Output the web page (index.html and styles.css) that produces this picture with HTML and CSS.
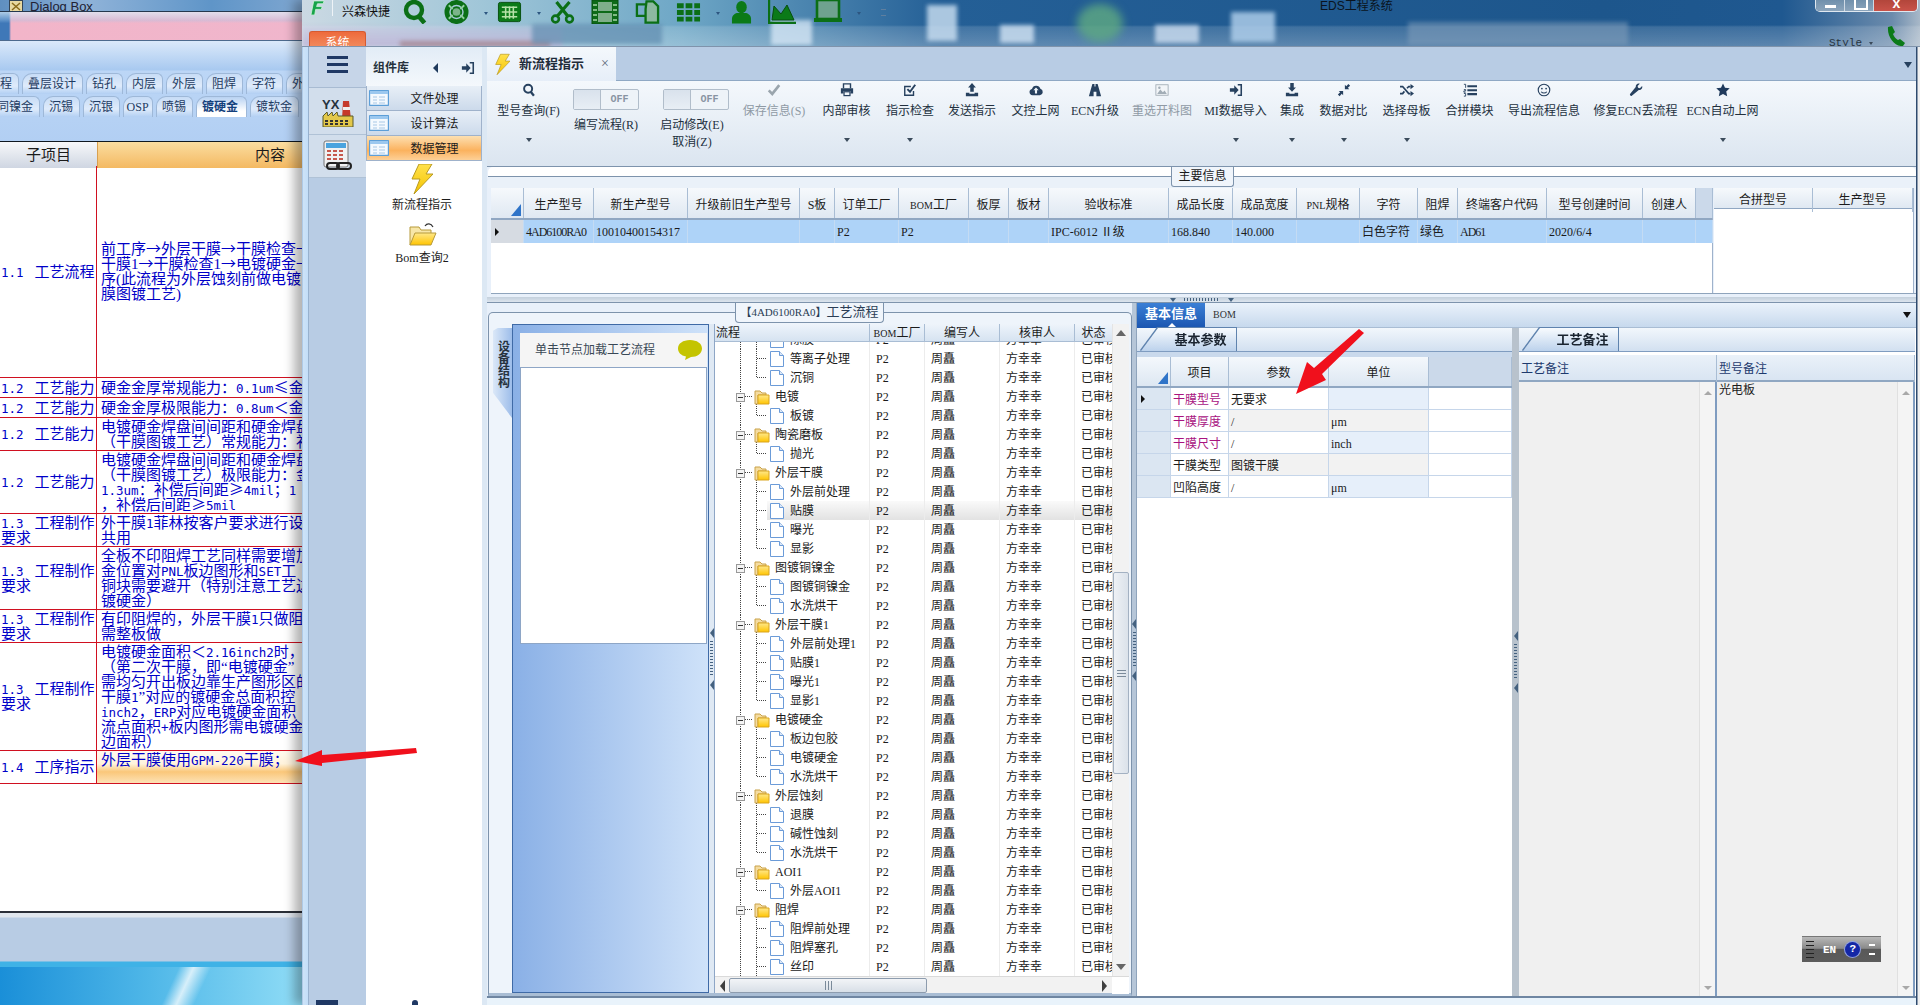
FILE: index.html
```html
<!DOCTYPE html>
<html lang="zh-CN">
<head>
<meta charset="utf-8">
<title>EDS工程系统</title>
<link rel="stylesheet" href="styles.css">
</head>
<body>
<svg class="defs" aria-hidden="true">
  <defs>
    <linearGradient id="fgold" x1="0" y1="0" x2="0" y2="1"><stop offset="0" stop-color="#ffe88a"/><stop offset="1" stop-color="#ffc400"/></linearGradient>
    <linearGradient id="bolt" x1="0" y1="0" x2="0" y2="1"><stop offset="0" stop-color="#ffe14d"/><stop offset="1" stop-color="#f5c400"/></linearGradient>
    <symbol id="folder" viewBox="0 0 16 16"><path d="M1 15V2h5l2 2h4v2H4v9z" fill="#f5dca0" stroke="#c9a24a"/><path d="M4 15V6h11v9z" fill="url(#fgold)" stroke="#d9a520"/></symbol>
    <symbol id="doc" viewBox="0 0 14 16"><path d="M.5.5h9l4 4v11H.5z" fill="#fff" stroke="#6b9bd8"/><path d="M9.5.5v4h4" fill="#dbe8f8" stroke="#6b9bd8"/></symbol>
    <symbol id="win" viewBox="0 0 20 16"><rect x=".5" y=".5" width="19" height="15" rx="1" fill="#f4f9fe" stroke="#5d9fd8" stroke-width="1.4"/><rect x="1" y="1" width="18" height="3" fill="#9cc8ef"/><path d="M4 7h4M10 7h6M4 10h4M10 10h6M4 13h4M10 13h6" stroke="#a8c8e6"/></symbol>
    <symbol id="g-search" viewBox="0 0 24 24"><circle cx="10.5" cy="10" r="8" fill="none" stroke="#0b6f16" stroke-width="4.4"/><path d="M15 16l6 7" stroke="#0b6f16" stroke-width="4.6"/></symbol>
    <symbol id="g-buoy" viewBox="0 0 26 24"><circle cx="13" cy="12" r="10" fill="none" stroke="#0b6f16" stroke-width="5"/><circle cx="13" cy="12" r="5" fill="#7bb48a" stroke="#0b6f16" stroke-width="2"/><path d="M5 5l4 4M21 5l-4 4M5 19l4-4M21 19l-4-4" stroke="#8fcf9c" stroke-width="2"/></symbol>
    <symbol id="g-table" viewBox="0 0 26 24"><rect x="1.5" y="2" width="23" height="20" rx="2" fill="#0b7a18" stroke="#064f0e"/><path d="M5 7h16M5 12h16M5 17h16M9 6v13M13 6v13M17 6v13" stroke="#b6e2a8" stroke-width="1.6"/></symbol>
    <symbol id="g-cut" viewBox="0 0 24 24"><path d="M6 2l12 15M19 2L6 17" stroke="#0b6f16" stroke-width="3.2"/><circle cx="5" cy="19" r="3.4" fill="none" stroke="#0b6f16" stroke-width="2.6"/><circle cx="19" cy="19" r="3.4" fill="none" stroke="#0b6f16" stroke-width="2.6"/></symbol>
    <symbol id="g-film" viewBox="0 0 28 24"><rect x="1" y="0" width="26" height="24" fill="#0e6a18" stroke="#064f0e"/><rect x="7" y="2" width="14" height="9" fill="#7fae8a"/><rect x="7" y="13" width="14" height="9" fill="#7fae8a"/><path d="M2 5h4M2 10h4M2 15h4M2 20h4M22 5h4M22 10h4M22 15h4M22 20h4" stroke="#a8d6a8" stroke-width="1.5"/></symbol>
    <symbol id="g-docs" viewBox="0 0 26 24"><path d="M2 4h9l3 3v9H2z" fill="none" stroke="#0b6f16" stroke-width="2.4"/><path d="M12 1h7l5 5v17H11V9z" fill="#8db9a0" stroke="#0b6f16" stroke-width="2.4"/></symbol>
    <symbol id="g-grid" viewBox="0 0 26 24"><path d="M1 3h7v5H1zM10 3h7v5h-7zM19 3h6v5h-6zM1 10h7v5H1zM10 10h7v5h-7zM19 10h6v5h-6zM1 17h7v5H1zM10 17h7v5h-7zM19 17h6v5h-6z" fill="#0b6f16"/></symbol>
    <symbol id="g-user" viewBox="0 0 22 24"><ellipse cx="11" cy="7" rx="5.5" ry="6.5" fill="#0b7a18"/><path d="M1 24v-5c0-4 4-6 6-6h8c2 0 6 2 6 6v5z" fill="#0b7a18"/></symbol>
    <symbol id="g-chart" viewBox="0 0 28 24"><path d="M1 0v23h27" fill="none" stroke="#0b6f16" stroke-width="2.4"/><path d="M4 20l2-14 7 8 6-9 7 15z" fill="#0b7a18" stroke="#064f0e"/></symbol>
    <symbol id="g-lap" viewBox="0 0 28 24"><rect x="3" y="0" width="22" height="19" fill="#6fa28f" stroke="#0b6f16" stroke-width="2.6"/><rect x="0" y="18" width="28" height="4" fill="#0b6f16"/></symbol>
    <symbol id="r-search" viewBox="0 0 16 16"><circle cx="7" cy="6.5" r="4.6" fill="none" stroke="#27415f" stroke-width="2.2"/><path d="M10 10l3.6 4.6" stroke="#27415f" stroke-width="2.6"/></symbol>
    <symbol id="r-check" viewBox="0 0 16 16"><path d="M2 8.5l4 4 8-10" fill="none" stroke="#9aa5ad" stroke-width="3"/></symbol>
    <symbol id="r-print" viewBox="0 0 16 16"><path d="M4 6V1h8v5" fill="none" stroke="#27415f" stroke-width="1.6"/><path d="M1 6h14v6h-3V9H4v3H1z" fill="#27415f"/><rect x="4.6" y="10" width="6.8" height="4.4" fill="none" stroke="#27415f" stroke-width="1.4"/></symbol>
    <symbol id="r-checkbox" viewBox="0 0 16 16"><path d="M12 9v5H2V4h7" fill="none" stroke="#27415f" stroke-width="1.6"/><path d="M5 7l3 3 6-8" fill="none" stroke="#27415f" stroke-width="2.2"/></symbol>
    <symbol id="r-upload" viewBox="0 0 16 16"><path d="M8 0l4.5 5H10v5H6V5H3.5z" fill="#27415f"/><path d="M1 11h4v1.4h6V11h4v4H1z" fill="#27415f"/></symbol>
    <symbol id="r-cloud" viewBox="0 0 16 16"><path d="M4 14a3.6 3.6 0 0 1-.6-7.1A5 5 0 0 1 13 6.6 3.8 3.8 0 0 1 12.5 14z" fill="#27415f"/><path d="M8 5l3 3.4H9.2V12H6.8V8.4H5z" fill="#eef4fa"/></symbol>
    <symbol id="r-road" viewBox="0 0 16 16"><path d="M5 1h2.4v3h1.2V1H11l4 14H9.6V10H6.4v5H1z" fill="#27415f"/></symbol>
    <symbol id="r-image" viewBox="0 0 16 16"><rect x="1" y="2" width="14" height="12" fill="#f2f5f8" stroke="#a2adb6"/><path d="M2.5 12.5l3.5-5 3 3 2-2 2.5 4z" fill="#a2adb6"/><circle cx="5" cy="5.5" r="1.4" fill="#a2adb6"/></symbol>
    <symbol id="r-signin" viewBox="0 0 16 16"><path d="M1 6h5V2.5L11 8l-5 5.5V10H1z" fill="#27415f"/><path d="M10 2h4v12h-4" fill="none" stroke="#27415f" stroke-width="1.8"/></symbol>
    <symbol id="r-download" viewBox="0 0 16 16"><path d="M6 0h4v5h2.5L8 10 3.5 5H6z" fill="#27415f"/><path d="M1 11h4v1.4h6V11h4v4H1z" fill="#27415f"/></symbol>
    <symbol id="r-compress" viewBox="0 0 16 16"><path d="M9 7V2l1.6 1.6L13 1l2 2-2.6 2.4L14 7zM7 9v5l-1.6-1.6L3 15l-2-2 2.6-2.4L2 9z" fill="#27415f"/></symbol>
    <symbol id="r-random" viewBox="0 0 16 16"><path d="M0 4h3l7 8h2M0 12h3l2-2.4M8 6l2-2h2" fill="none" stroke="#27415f" stroke-width="2"/><path d="M12 1l4 3-4 3zM12 9l4 3-4 3z" fill="#27415f"/></symbol>
    <symbol id="r-list" viewBox="0 0 16 16"><path d="M5 2.500h11v2.400H5zM5 7h11v2.400H5zM5 11.500h11v2.400H5z" fill="#27415f"/><path d="M1 1.500h2v4M1 7.500h2v1.500H1v1.500h2M1 12h2v3H1" fill="none" stroke="#27415f"/></symbol>
    <symbol id="r-smile" viewBox="0 0 16 16"><circle cx="8" cy="8" r="6.600" fill="none" stroke="#27415f" stroke-width="1.3"/><circle cx="5.600" cy="6.400" r="1" fill="#27415f"/><circle cx="10.400" cy="6.400" r="1" fill="#27415f"/><path d="M4.800 10c1.500 2 4.900 2 6.400 0" fill="none" stroke="#27415f" stroke-width="1.2"/></symbol>
    <symbol id="r-wrench" viewBox="0 0 16 16"><path d="M15 3.500l-2.600 2.400-2-.6-.6-2L12.300.8C10 0 7.500 1.500 7.700 4.500L1.200 12.500c-.8 1 1 2.900 2 2.100l8-6.500C14 8.300 15.800 6 15 3.500z" fill="#27415f"/></symbol>
    <symbol id="r-star" viewBox="0 0 16 16"><path d="M8 .5l2.300 5 5.400.6-4 3.700 1.100 5.400L8 12.500l-4.800 2.700 1.100-5.400-4-3.700 5.400-.6z" fill="#1f3a5c"/></symbol>
  </defs>
</svg>

<div class="desktop-streak"></div>

<section class="win-left">
  <div class="lw-title"><svg class="lw-ico" viewBox="0 0 14 12"><rect x=".5" y=".5" width="13" height="11" fill="#e8d8a0" stroke="#345"/><path d="M3 3l8 7M11 3l-8 7" stroke="#8a6a1a" stroke-width="1.5"/></svg><span>Dialog Box</span></div>
  <div class="lw-blur"></div>
  <div class="lw-tabs">
    <div class="tabrow tabrow-a">
      <span class="lt lt-first">程</span><span class="lt">叠层设计</span><span class="lt">钻孔</span><span class="lt">内层</span><span class="lt">外层</span><span class="lt">阻焊</span><span class="lt">字符</span><span class="lt">外</span>
    </div>
    <div class="tabrow tabrow-b">
      <span class="lt lt-second">同镍金</span><span class="lt">沉锡</span><span class="lt">沉银</span><span class="lt lt-osp">OSP</span><span class="lt">喷锡</span><span class="lt lt-on">镀硬金</span><span class="lt">镀软金</span>
    </div>
  </div>
  <div class="lw-head"><div class="lh-a">子项目</div><div class="lh-b">内容</div></div>
  <div class="lw-grid">
    <div class="lc1"><span><span class="nm">1.1</span>工艺流程</span></div><div class="lc2"><span>前工序<span class="w">→</span>外层干膜<span class="w">→</span>干膜检查<span class="w">→</span><br>干膜1<span class="w">→</span>干膜检查1<span class="w">→</span>电镀硬金<span class="w">→</span><br>序(此流程为外层蚀刻前做电镀<br>膜图镀工艺)</span></div>
    <div class="lc1"><span><span class="nm">1.2</span>工艺能力</span></div><div class="lc2"><span>硬金金厚常规能力：<span class="l">0.1um</span><span class="w">≤</span>金</span></div>
    <div class="lc1"><span><span class="nm">1.2</span>工艺能力</span></div><div class="lc2"><span>硬金金厚极限能力：<span class="l">0.8um</span>＜金</span></div>
    <div class="lc1"><span><span class="nm">1.2</span>工艺能力</span></div><div class="lc2"><span>电镀硬金焊盘间间距和硬金焊盘<br>（干膜图镀工艺）常规能力：补</span></div>
    <div class="lc1"><span><span class="nm">1.2</span>工艺能力</span></div><div class="lc2"><span>电镀硬金焊盘间间距和硬金焊盘<br>（干膜图镀工艺）极限能力：金<br><span class="l">1.3um</span>：补偿后间距<span class="w">≥</span><span class="l">4mil</span>；<span class="l">1</span><br>，补偿后间距<span class="w">≥</span><span class="l">5mil</span></span></div>
    <div class="lc1"><span><span class="nm">1.3</span>工程制作<br>要求</span></div><div class="lc2"><span>外干膜<span class="l">1</span>菲林按客户要求进行设<br>共用</span></div>
    <div class="lc1"><span><span class="nm">1.3</span>工程制作<br>要求</span></div><div class="lc2"><span>全板不印阻焊工艺同样需要增加<br>金位置对<span class="l">PNL</span>板边图形和<span class="l">SET</span>工<br>铜块需要避开（特别注意工艺边<br>镀硬金）</span></div>
    <div class="lc1"><span><span class="nm">1.3</span>工程制作<br>要求</span></div><div class="lc2"><span>有印阻焊的，外层干膜<span class="l">1</span>只做阻<br>需整板做</span></div>
    <div class="lc1"><span><span class="nm">1.3</span>工程制作<br>要求</span></div><div class="lc2"><span>电镀硬金面积＜<span class="l">2.16inch2</span>时，<br>（第二次干膜，即“电镀硬金”<br>需均匀开出板边靠生产图形区的<br>干膜<span class="l">1</span>”对应的镀硬金总面积控<br><span class="l">inch2</span>，<span class="l">ERP</span>对应电镀硬金面积<br>流点面积<span class="l">+</span>板内图形需电镀硬金<br>边面积）</span></div>
    <div class="lc1"><span><span class="nm">1.4</span>工序指示</span></div><div class="lc2 lc-hot"><span>外层干膜使用<span class="l">GPM-220</span>干膜；</span></div>
  </div>
  <div class="lw-blank"></div>
  <div class="lw-status"></div>
</section>

<section class="win-main">
  <header class="tb">
    <span class="blob b1"></span><span class="blob b2"></span><span class="blob b3"></span><span class="blob b4"></span><span class="blob b5"></span><span class="blob b6"></span><span class="blob b7"></span><span class="blob b8"></span><span class="blob b9"></span><span class="blob b10"></span>
    <div class="tb-tools">
      <svg class="logo" viewBox="0 0 16 16"><path d="M4 1h11l-1 3H8L7 7h6l-1 3H6l-1 6H1z" fill="#17a34a" stroke="#d6f5df" stroke-width=".8"/></svg>
      <i class="tb-sep"></i>
      <span class="tb-name">兴森快捷</span>
      <svg class="gi gi-s"><use href="#g-search"/></svg>
      <svg class="gi gi-s"><use href="#g-buoy"/></svg>
      <i class="tb-drop"></i>
      <svg class="gi gi-s"><use href="#g-table"/></svg>
      <i class="tb-drop"></i>
      <svg class="gi gi-s"><use href="#g-cut"/></svg>
      <svg class="gi gi-w"><use href="#g-film"/></svg>
      <svg class="gi gi-s"><use href="#g-docs"/></svg>
      <svg class="gi gi-s"><use href="#g-grid"/></svg>
      <i class="tb-drop"></i>
      <svg class="gi gi-n"><use href="#g-user"/></svg>
      <svg class="gi gi-w"><use href="#g-chart"/></svg>
      <svg class="gi gi-w gi-lap"><use href="#g-lap"/></svg>
      <i class="tb-drop"></i>
      <i class="tb-grab"></i>
    </div>
    <div class="tb-title">EDS工程系统</div>
    <div class="winbtns"><span class="wb wb-min"></span><span class="wb wb-max"></span><span class="wb wb-close">x</span></div>
    <div class="tb-style"><span>Style</span><i class="tb-drop tb-drop-s"></i></div>
    <svg class="phone" viewBox="0 0 20 20"><path d="M2 1l4-1 3 6-2 2c1 3 3 5 5 6l2-1 5 4-2 3c-8 1-16-9-15-19z" fill="#0b7a18"/></svg>
    <div class="systab">系统</div>
  </header>

  <div class="frame">
    <i class="edge"></i>
    <nav class="rail">
      <div class="rail-a"><span class="burger"></span></div>
      <div class="rail-b">
        <svg class="yx" viewBox="0 0 32 32"><text x="0" y="14" class="yx-t">YX</text><path d="M21 6h6l2 19h-9z" fill="#c53a2b"/><path d="M21 12h7v3h-7z" fill="#eee"/><path d="M1 32V21l4-4 1 4 4-4 1 4 4-4 1 4h15v11z" fill="#e3c84a" stroke="#5a5a2a"/><path d="M3 26h3M8 26h3M13 26h3M18 26h3M23 26h3M3 29h3M8 29h3M13 29h3M18 29h3M23 29h3" stroke="#333" stroke-width="2"/></svg>
      </div>
      <div class="rail-c">
        <svg class="calc" viewBox="0 0 30 32"><rect x="1" y="1" width="24" height="26" rx="2" fill="#f0f1f2" stroke="#777"/><rect x="3" y="3" width="20" height="5" fill="#4aa3de"/><path d="M4 11h4M10 11h4M16 11h4M4 15h4M10 15h4M16 15h4M4 19h4M10 19h4M16 19h4" stroke="#c6584c" stroke-width="2"/><rect x="4" y="23" width="12" height="6" rx="3" fill="none" stroke="#222" stroke-width="2"/><rect x="14" y="23" width="14" height="6" rx="3" fill="none" stroke="#222" stroke-width="2"/></svg>
      </div>
    </nav>
    <aside class="comps">
      <div class="comps-head"><b>组件库</b><i class="tri-l"></i><svg class="rico"><use href="#r-signin"/></svg></div>
      <div class="comp-row"><svg class="wi"><use href="#win"/></svg><span>文件处理</span></div>
      <div class="comp-row"><svg class="wi"><use href="#win"/></svg><span>设计算法</span></div>
      <div class="comp-row comp-on"><svg class="wi"><use href="#win"/></svg><span>数据管理</span></div>
      <div class="comp-item">
        <svg class="bolt-l" viewBox="0 0 22 30"><path d="M8 0h13l-6 10h7L3 30l6-15H1z" fill="url(#bolt)" stroke="#b89a20"/></svg>
        <span>新流程指示</span>
      </div>
      <div class="comp-item comp-item-b">
        <svg class="fold-l" viewBox="0 0 30 26"><path d="M3 24V6h9l2 3h10v4" fill="#f7e6a8" stroke="#b79a3a"/><path d="M3 24l5-12h21l-5 12z" fill="url(#fgold)" stroke="#b79a3a"/><path d="M18 5c2-3 6-3 8 1" fill="none" stroke="#333" stroke-width="1.2"/></svg>
        <span>Bom查询2</span>
      </div>
    </aside>
    <main class="content">
      <div class="tabstrip">
        <div class="doc-tab"><svg class="bolt-s" viewBox="0 0 22 30"><path d="M8 0h13l-6 10h7L3 30l6-15H1z" fill="url(#bolt)" stroke="#b89a20"/></svg><b>新流程指示</b><span class="x">×</span></div>
        <i class="strip-drop"></i>
      </div>
      <div class="ribbon">
        <div class="ri"><svg class="rico"><use href="#r-search"/></svg><span>型号查询(F)</span><i class="dn"></i></div>
        <div class="ri ri-t"><span class="tg"><i></i><b>OFF</b></span><span>编写流程(R)</span></div>
        <div class="ri ri-t ri-t2"><span class="tg"><i></i><b>OFF</b></span><span>启动修改(E)</span><span>取消(Z)</span></div>
        <div class="ri ri-off"><svg class="rico"><use href="#r-check"/></svg><span>保存信息(S)</span></div>
        <div class="ri"><svg class="rico"><use href="#r-print"/></svg><span>内部审核</span><i class="dn"></i></div>
        <div class="ri"><svg class="rico"><use href="#r-checkbox"/></svg><span>指示检查</span><i class="dn"></i></div>
        <div class="ri"><svg class="rico"><use href="#r-upload"/></svg><span>发送指示</span></div>
        <div class="ri"><svg class="rico"><use href="#r-cloud"/></svg><span>文控上网</span></div>
        <div class="ri"><svg class="rico"><use href="#r-road"/></svg><span>ECN升级</span></div>
        <div class="ri ri-off"><svg class="rico"><use href="#r-image"/></svg><span>重选开料图</span></div>
        <div class="ri"><svg class="rico"><use href="#r-signin"/></svg><span>MI数据导入</span><i class="dn"></i></div>
        <div class="ri"><svg class="rico"><use href="#r-download"/></svg><span>集成</span><i class="dn"></i></div>
        <div class="ri"><svg class="rico"><use href="#r-compress"/></svg><span>数据对比</span><i class="dn"></i></div>
        <div class="ri"><svg class="rico"><use href="#r-random"/></svg><span>选择母板</span><i class="dn"></i></div>
        <div class="ri"><svg class="rico"><use href="#r-list"/></svg><span>合拼模块</span></div>
        <div class="ri"><svg class="rico"><use href="#r-smile"/></svg><span>导出流程信息</span></div>
        <div class="ri"><svg class="rico"><use href="#r-wrench"/></svg><span>修复ECN丢流程</span></div>
        <div class="ri"><svg class="rico"><use href="#r-star"/></svg><span>ECN自动上网</span><i class="dn"></i></div>
      </div>

      <section class="info">
        <div class="legend-main">主要信息</div>
        <div class="info-top"></div>
        <div class="info-body">
          <div class="it">
            <div class="it-row it-head">
              <div class="corner"><i></i></div><div>生产型号</div><div>新生产型号</div><div>升级前旧生产型号</div><div>S板</div><div>订单工厂</div><div><span class="sm">BOM</span>工厂</div><div>板厚</div><div>板材</div><div>验收标准</div><div>成品长度</div><div>成品宽度</div><div><span class="sm">PNL</span>规格</div><div>字符</div><div>阻焊</div><div>终端客户代码</div><div>型号创建时间</div><div>创建人</div><div class="filler"></div>
            </div>
            <div class="it-row it-data">
              <div class="rowmark"><i></i></div><div class="cap">4AD6100RA0</div><div>10010400154317</div><div></div><div></div><div>P2</div><div>P2</div><div></div><div></div><div>IPC-6012 Ⅱ级</div><div>168.840</div><div>140.000</div><div></div><div>白色字符</div><div>绿色</div><div class="cap">AD61</div><div>2020/6/4</div><div></div><div></div>
            </div>
          </div>
          <div class="mt">
            <div class="mt-head"><div>合拼型号</div><div>生产型号</div></div>
          </div>
        </div>
      </section>

      <div class="split-h"><i class="tri-d"></i><span class="dots-h"></span><i class="tri-d"></i></div>

      <section class="lower">
        <div class="proc">
          <div class="legend-proc"><span>【4AD6100RA0】</span>工艺流程</div>
          <div class="proc-box">
            <div class="vtab"><span>设备结构</span></div>
            <div class="blue">
              <div class="blue-head"><span>单击节点加载工艺流程</span><svg class="bubble" viewBox="0 0 24 20"><path d="M12 0c7 0 12 3.5 12 8.500S19 17 13 17l-6 3 1-3.500C3 15.500 0 12.500 0 8.500 0 3.500 5 0 12 0z" fill="#c4c400"/></svg></div>
              <div class="blue-list"></div>
            </div>
            <div class="gap-v"><i class="tri-l2"></i><span class="dots-v"></span><i class="tri-l2"></i></div>
            <div class="tree">
              <div class="tree-main">
                <div class="tree-left">
                  <div class="tr tr-head"><div>流程</div><div class="tc"><span class="sm">BOM</span>工厂</div><div class="tc">编写人</div><div class="tc">核审人</div><div class="tc">状态</div></div>
                  <div class="tree-rows">
                    <div class="tr"><div class="n leaf"><svg class="d"><use href="#doc"/></svg>除胶</div><div>P2</div><div>周矗</div><div>方幸幸</div><div>已审核</div></div>
                    <div class="tr"><div class="n leaf"><svg class="d"><use href="#doc"/></svg>等离子处理</div><div>P2</div><div>周矗</div><div>方幸幸</div><div>已审核</div></div>
                    <div class="tr"><div class="n leaf end"><svg class="d"><use href="#doc"/></svg>沉铜</div><div>P2</div><div>周矗</div><div>方幸幸</div><div>已审核</div></div>
                    <div class="tr"><div class="n fo"><i class="mi"></i><svg class="f"><use href="#folder"/></svg>电镀</div><div>P2</div><div>周矗</div><div>方幸幸</div><div>已审核</div></div>
                    <div class="tr"><div class="n leaf end"><svg class="d"><use href="#doc"/></svg>板镀</div><div>P2</div><div>周矗</div><div>方幸幸</div><div>已审核</div></div>
                    <div class="tr"><div class="n fo"><i class="mi"></i><svg class="f"><use href="#folder"/></svg>陶瓷磨板</div><div>P2</div><div>周矗</div><div>方幸幸</div><div>已审核</div></div>
                    <div class="tr"><div class="n leaf end"><svg class="d"><use href="#doc"/></svg>抛光</div><div>P2</div><div>周矗</div><div>方幸幸</div><div>已审核</div></div>
                    <div class="tr"><div class="n fo"><i class="mi"></i><svg class="f"><use href="#folder"/></svg>外层干膜</div><div>P2</div><div>周矗</div><div>方幸幸</div><div>已审核</div></div>
                    <div class="tr"><div class="n leaf"><svg class="d"><use href="#doc"/></svg>外层前处理</div><div>P2</div><div>周矗</div><div>方幸幸</div><div>已审核</div></div>
                    <div class="tr tr-sel"><div class="n leaf"><svg class="d"><use href="#doc"/></svg>贴膜</div><div>P2</div><div>周矗</div><div>方幸幸</div><div>已审核</div></div>
                    <div class="tr"><div class="n leaf"><svg class="d"><use href="#doc"/></svg>曝光</div><div>P2</div><div>周矗</div><div>方幸幸</div><div>已审核</div></div>
                    <div class="tr"><div class="n leaf end"><svg class="d"><use href="#doc"/></svg>显影</div><div>P2</div><div>周矗</div><div>方幸幸</div><div>已审核</div></div>
                    <div class="tr"><div class="n fo"><i class="mi"></i><svg class="f"><use href="#folder"/></svg>图镀铜镍金</div><div>P2</div><div>周矗</div><div>方幸幸</div><div>已审核</div></div>
                    <div class="tr"><div class="n leaf"><svg class="d"><use href="#doc"/></svg>图镀铜镍金</div><div>P2</div><div>周矗</div><div>方幸幸</div><div>已审核</div></div>
                    <div class="tr"><div class="n leaf end"><svg class="d"><use href="#doc"/></svg>水洗烘干</div><div>P2</div><div>周矗</div><div>方幸幸</div><div>已审核</div></div>
                    <div class="tr"><div class="n fo"><i class="mi"></i><svg class="f"><use href="#folder"/></svg>外层干膜1</div><div>P2</div><div>周矗</div><div>方幸幸</div><div>已审核</div></div>
                    <div class="tr"><div class="n leaf"><svg class="d"><use href="#doc"/></svg>外层前处理1</div><div>P2</div><div>周矗</div><div>方幸幸</div><div>已审核</div></div>
                    <div class="tr"><div class="n leaf"><svg class="d"><use href="#doc"/></svg>贴膜1</div><div>P2</div><div>周矗</div><div>方幸幸</div><div>已审核</div></div>
                    <div class="tr"><div class="n leaf"><svg class="d"><use href="#doc"/></svg>曝光1</div><div>P2</div><div>周矗</div><div>方幸幸</div><div>已审核</div></div>
                    <div class="tr"><div class="n leaf end"><svg class="d"><use href="#doc"/></svg>显影1</div><div>P2</div><div>周矗</div><div>方幸幸</div><div>已审核</div></div>
                    <div class="tr"><div class="n fo"><i class="mi"></i><svg class="f"><use href="#folder"/></svg>电镀硬金</div><div>P2</div><div>周矗</div><div>方幸幸</div><div>已审核</div></div>
                    <div class="tr"><div class="n leaf"><svg class="d"><use href="#doc"/></svg>板边包胶</div><div>P2</div><div>周矗</div><div>方幸幸</div><div>已审核</div></div>
                    <div class="tr"><div class="n leaf"><svg class="d"><use href="#doc"/></svg>电镀硬金</div><div>P2</div><div>周矗</div><div>方幸幸</div><div>已审核</div></div>
                    <div class="tr"><div class="n leaf end"><svg class="d"><use href="#doc"/></svg>水洗烘干</div><div>P2</div><div>周矗</div><div>方幸幸</div><div>已审核</div></div>
                    <div class="tr"><div class="n fo"><i class="mi"></i><svg class="f"><use href="#folder"/></svg>外层蚀刻</div><div>P2</div><div>周矗</div><div>方幸幸</div><div>已审核</div></div>
                    <div class="tr"><div class="n leaf"><svg class="d"><use href="#doc"/></svg>退膜</div><div>P2</div><div>周矗</div><div>方幸幸</div><div>已审核</div></div>
                    <div class="tr"><div class="n leaf"><svg class="d"><use href="#doc"/></svg>碱性蚀刻</div><div>P2</div><div>周矗</div><div>方幸幸</div><div>已审核</div></div>
                    <div class="tr"><div class="n leaf end"><svg class="d"><use href="#doc"/></svg>水洗烘干</div><div>P2</div><div>周矗</div><div>方幸幸</div><div>已审核</div></div>
                    <div class="tr"><div class="n fo"><i class="mi"></i><svg class="f"><use href="#folder"/></svg>AOI1</div><div>P2</div><div>周矗</div><div>方幸幸</div><div>已审核</div></div>
                    <div class="tr"><div class="n leaf end"><svg class="d"><use href="#doc"/></svg>外层AOI1</div><div>P2</div><div>周矗</div><div>方幸幸</div><div>已审核</div></div>
                    <div class="tr"><div class="n fo"><i class="mi"></i><svg class="f"><use href="#folder"/></svg>阻焊</div><div>P2</div><div>周矗</div><div>方幸幸</div><div>已审核</div></div>
                    <div class="tr"><div class="n leaf"><svg class="d"><use href="#doc"/></svg>阻焊前处理</div><div>P2</div><div>周矗</div><div>方幸幸</div><div>已审核</div></div>
                    <div class="tr"><div class="n leaf"><svg class="d"><use href="#doc"/></svg>阻焊塞孔</div><div>P2</div><div>周矗</div><div>方幸幸</div><div>已审核</div></div>
                    <div class="tr"><div class="n leaf"><svg class="d"><use href="#doc"/></svg>丝印</div><div>P2</div><div>周矗</div><div>方幸幸</div><div>已审核</div></div>
                  </div>
                </div>
                <div class="vs"><i class="ar-u"></i><span></span><b class="vs-thumb"><i class="lines"></i></b><span></span><i class="ar-d"></i></div>
              </div>
              <div class="hs"><i class="ar-l"></i><b class="hs-thumb"><i class="lines-v"></i></b><span></span><i class="ar-r"></i><em></em></div>
            </div>
          </div>
        </div>

        <div class="gap-mid"><i class="tri-l2"></i><span class="dots-v"></span><i class="tri-l2"></i></div>

        <div class="detail">
          <div class="detail-tabs"><div class="dt-on"><b>基本信息</b><i></i></div><span class="dt-bom">BOM</span><em class="strip-drop"></em></div>
          <div class="detail-body">
            <div class="sub">
              <div class="subtabs"><div class="subtab-wrap"><div class="subtab"><b>基本参数</b></div></div></div>
              <div class="pt">
                <div class="pt-row pt-head"><div class="corner"><i></i></div><div>项目</div><div>参数</div><div>单位</div><div class="filler"></div></div>
                <div class="pt-row"><div class="rowmark"><i></i></div><div class="pk">干膜型号</div><div>无要求</div><div class="blu"></div><div></div></div>
                <div class="pt-row"><div class="rowmark"></div><div class="pk">干膜厚度</div><div class="gry">/</div><div class="gry">μm</div><div></div></div>
                <div class="pt-row"><div class="rowmark"></div><div class="pk">干膜尺寸</div><div>/</div><div class="blu">inch</div><div></div></div>
                <div class="pt-row"><div class="rowmark"></div><div>干膜类型</div><div class="gry">图镀干膜</div><div class="gry"></div><div></div></div>
                <div class="pt-row"><div class="rowmark"></div><div>凹陷高度</div><div>/</div><div class="blu">μm</div><div></div></div>
              </div>
            </div>
            <div class="gap-sub"><i class="tri-l2"></i><span class="dots-v"></span><i class="tri-l2"></i></div>
            <div class="sub sub-r">
              <div class="subtabs"><div class="subtab-wrap"><div class="subtab"><b>工艺备注</b></div></div></div>
              <div class="note-head"><div>工艺备注</div><div>型号备注</div></div>
              <div class="note-body">
                <div class="note"><div class="note-t"></div><div class="note-s"><i class="nu"></i><i class="nd"></i></div></div>
                <div class="note"><div class="note-t">光电板</div><div class="note-s"><i class="nu"></i><i class="nd"></i></div></div>
              </div>
            </div>
          </div>
        </div>
      </section>
      <footer class="status-end"></footer>
    </main>
    <i class="edge-r"></i>
  </div>
  <div class="bottom-bits"><i class="bb-a"></i><i class="bb-b"></i></div>
</section>

<div class="lang"><i class="lang-dots"></i><span>EN</span><span class="lang-q">?</span><span class="lang-m"><i></i><i></i></span></div>

<svg class="arrows" viewBox="0 0 1920 1005" aria-hidden="true">
  <polygon points="295,761 322,750 322,755 416,748 417,753 322,763 322,766" fill="#f0101c"/>
  <polygon points="1296,394 1307,362 1314,368 1359,329 1364,333 1322,374 1326,380" fill="#f0101c"/>
</svg>
</body>
</html>
```
FILE: styles.css
```css
* { box-sizing: border-box; }
html, body { margin: 0; padding: 0; }
body {
  width: 1920px; height: 1005px; overflow: hidden; position: relative;
  font: 12px/1.2 "Liberation Serif", "Noto Sans CJK SC", sans-serif; color: #1b1b1b;
  background: linear-gradient(90deg, #1a8fd8 0, #4fb7e8 150px, #8fdcf6 300px);
}
i, em { font-style: normal; display: block; }
.defs { position: absolute; width: 0; height: 0; }
.desktop-streak {
  position: absolute; left: 120px; top: 967px; width: 130px; height: 38px;
  background: linear-gradient(115deg, transparent 40%, rgba(255,255,255,.75) 50%, transparent 62%);
}
.sm { font-size: 10px; }
.cap { letter-spacing: -1px; }

/* left window */
.win-left { position: absolute; left: 0; top: 0; width: 302px; height: 967px; display: flex; flex-direction: column; background: #fff; overflow: hidden; }
.lw-title { height: 12px; flex: none; display: flex; padding-left: 9px; gap: 7px; overflow: hidden; background: linear-gradient(90deg, #5f8fc0, #8eb2d8 30%, #5f95c8 70%, #7ea6d0); border-bottom: 1px solid #26384e; font: 13px/12px "Liberation Sans", sans-serif; color: #223; }
.lw-ico { width: 14px; height: 12px; }
.lw-title span { position: relative; top: 1px; }
.lw-blur { height: 29px; flex: none; background: linear-gradient(180deg, rgba(220,240,250,.7) 0, rgba(160,200,235,.3) 30%, transparent 40%), linear-gradient(90deg, #3f78b8 0, #3f78b8 9px, #f2b5c9 11px, #f0b6cc 100%); border-bottom: 1px solid #4d6a8d; }
.lw-tabs { height: 101px; flex: none; padding-top: 32px; background: linear-gradient(180deg, #dbe9fa 0, #a8c9f0 29px, #bcd6f6 30px, #b2cff3 100%); overflow: hidden; border-bottom: 1px solid #101820; }
.tabrow { display: flex; gap: 3px; height: 21px; white-space: nowrap; font-size: 12px; color: #1f3c62; }
.tabrow-b { margin-top: 2px; }
.lt { flex: none; height: 21px; line-height: 20px; padding: 0 5.5px; border: 1px solid #9eb8d8; border-bottom: 0; border-radius: 10px 6px 0 0; background: linear-gradient(180deg, #c7dcf6, #dfebfb 60%, #b2cff3); }
.lt-first { margin-left: -6.5px; }
.lt-second { margin-left: -9.5px; }
.lt-osp { padding: 0 3px; }
.lt-on { padding-right: 7.5px; background: linear-gradient(180deg, #b8d2f2, #fff 70%); font-weight: 700; color: #14407c; }
.lw-head { display: grid; flex: none; grid-template-columns: 97px 1fr; height: 24px; font-size: 15px; line-height: 26px; }
.lh-a { text-align: center; background: linear-gradient(180deg, #f7f8fa, #cfd6e2); }
.lh-b { text-align: right; padding-right: 17px; background: linear-gradient(180deg, #fbdda0, #f4b962); border-left: 1px solid #d8a050; }
.lw-grid { flex: none; display: grid; grid-template-columns: 97px 205px; grid-template-rows: 212px 20px 20px 33px 63px 33px 63px 33px 108px 33px; font-size: 15px; line-height: 15px; color: #0000c8; white-space: nowrap; }
.lc1, .lc2 { display: flex; align-items: center; overflow: hidden; padding-top: 1px; border-bottom: 1px solid #d01020; }
.lc1 { padding-left: 1px; border-right: 1px solid #d01020; }
.lc2 { padding-left: 4px; }
.nm { font: 12.5px/0 "DejaVu Sans Mono", monospace; margin-right: 11px; }
.l { font: 12.5px/0 "DejaVu Sans Mono", monospace; }
.w { font-family: "Noto Sans CJK SC", sans-serif; line-height: 0; }
.lc-hot { align-items: flex-start; padding-top: 2px; background: linear-gradient(180deg, #fffaf0 0, #fff3dc 40%, #fac77a 65%, #fde2b6 100%); }
.lw-blank { flex: 1; border-bottom: 2px solid #2a2f38; }
.lw-status { height: 54px; flex: none; background: linear-gradient(180deg, #e0e6ee 0, #e0e6ee 4px, #b8cce4 5px, #b8cce4 48px, #3fb2e6 49px); }

/* main window */
.win-main { position: absolute; left: 302px; top: 0; width: 1618px; height: 1005px; display: flex; flex-direction: column; box-shadow: -8px 0 10px rgba(0,0,0,.3); }
.tb { height: 47px; flex: none; position: relative; overflow: hidden;
  background: linear-gradient(180deg, rgba(255,255,255,0) 0, rgba(255,255,255,0) 25px, rgba(255,255,255,.14) 27px, rgba(255,255,255,.28) 47px), linear-gradient(90deg, #cbd9e3 0, #a0c6d8 180px, #6ea7c6 380px, #245f96 640px, #1d568c 1300px, #1f5890 1480px, #6b8bac 1590px, #a8b8c8 1618px);
  border-bottom: 1px solid #7f93ab; }
.blob { position: absolute; filter: blur(2px); }
.b1 { left: 0; top: 26px; width: 260px; height: 21px; background: linear-gradient(180deg, rgba(195,185,225,.3), #bdb7d6); }
.b2 { left: 98px; top: 41px; width: 150px; height: 6px; background: #a8909e; }
.b3 { left: 230px; top: 24px; width: 130px; height: 20px; background: rgba(96,140,175,.7); }
.b4 { left: 469px; top: 20px; width: 41px; height: 25px; background: rgba(220,235,248,.75); }
.b5 { left: 625px; top: 5px; width: 30px; height: 36px; background: rgba(205,225,242,.8); }
.b6 { left: 698px; top: 25px; width: 34px; height: 18px; background: rgba(210,228,244,.8); }
.b7 { left: 775px; top: 4px; width: 46px; height: 38px; border-radius: 50%; background: rgba(95,170,130,.8); filter: blur(4px); }
.b8 { left: 853px; top: 25px; width: 44px; height: 18px; background: rgba(215,230,245,.75); }
.b9 { left: 929px; top: 12px; width: 44px; height: 30px; background: rgba(180,210,238,.8); }
.b10 { left: 1106px; top: 22px; width: 220px; height: 23px; background: rgba(125,155,185,.6); }
.tb-tools { position: relative; display: flex; align-items: flex-start; gap: 16px; padding-left: 8px; height: 24px; }
.logo { width: 15px; height: 15px; margin-right: -9px; }
.tb-sep { width: 1px; height: 16px; background: #eef3f7; margin-right: -7px; }
.tb-name { margin-top: 5px; font-size: 12px; line-height: 15px; color: #111; white-space: nowrap; margin-right: -3px; }
.gi { flex: none; height: 24px; }
.gi-s { width: 25px; }
.gi-w { width: 28px; }
.gi-n { width: 21px; margin-left: 2px; }
.gi-lap { margin-left: 2px; }
.tb-drop { flex: none; width: 0; height: 0; margin: 12px -7px 0 -1px; border-left: 2.5px solid transparent; border-right: 2.5px solid transparent; border-top: 3px solid #2d5680; }
.tb-drop-s { margin: 5px 0 0 0; border-top-color: #3a4a5a; }
.tb-grab { flex: none; width: 5px; height: 7px; margin-top: 9px; margin-left: 11px; border-top: 1px solid #5f7f9f; border-bottom: 1px solid #5f7f9f; }
.tb-title { position: absolute; left: 1018px; top: 0; font: 12px/13px "Liberation Sans", "Noto Sans CJK SC", sans-serif; color: #0a1420; }
.winbtns { position: absolute; left: 1513px; top: -1px; width: 103px; height: 13px; display: grid; grid-template-columns: 29px 29px 45px; border: 1px solid #e0e8f0; border-top: 0; border-radius: 0 0 5px 5px; overflow: hidden; }
.wb { background: linear-gradient(180deg, #6e8eaa, #8ca5bc); position: relative; border-right: 1px solid #cfdae5; }
.wb-min::after { content: ""; position: absolute; left: 9px; top: 6px; width: 11px; height: 3px; background: #fff; }
.wb-max::after { content: ""; position: absolute; left: 9px; top: -2px; width: 10px; height: 9px; border: 2px solid #fff; }
.wb-close { background: linear-gradient(180deg, #b0453a, #c9534a); color: #fff; font: 700 14px/8px "Liberation Sans", sans-serif; text-align: center; border: 0; }
.tb-style { position: absolute; left: 1527px; top: 37px; display: flex; gap: 7px; font: 11px/12px "Liberation Mono", monospace; color: #26323e; }
.phone { position: absolute; left: 1584px; top: 26px; width: 20px; height: 20px; }
.systab { position: absolute; left: 7px; top: 31px; width: 57px; height: 16px; overflow: hidden; border-radius: 3px 3px 0 0; background: linear-gradient(180deg, #ee6a3c, #f28a5c); border: 1px solid #d65a30; border-bottom: 0; color: #fff; text-align: center; line-height: 22px; }

.frame { flex: 1; display: flex; min-height: 0; background: #fff; }
.edge { flex: none; width: 7px; background: linear-gradient(90deg, #8fb0d4 0, #cde3f8 1px, #c3def8 6px, #6c85a5 7px); }
.edge-r { flex: none; width: 4px; background: linear-gradient(90deg, #2e4a6e 0, #2e4a6e 1px, #f0f0f0 2px); }
.rail { flex: none; width: 57px; background: #b8cce4; display: flex; flex-direction: column; }
.rail-a { height: 41px; display: flex; justify-content: center; padding-top: 9px; background: #c6d5e8; border-bottom: 1px solid #a8bbd2; }
.burger { width: 21px; height: 17px; background: linear-gradient(180deg, #1f3864 0 3px, transparent 3px 7px, #1f3864 7px 10px, transparent 10px 14px, #1f3864 14px 17px); }
.rail-b { height: 47px; display: flex; justify-content: center; align-items: center; background: #d2deec; border-bottom: 1px solid #b0c2d6; }
.yx { width: 32px; height: 32px; }
.yx-t { font: 700 13px "Liberation Sans", sans-serif; fill: #26323e; }
.rail-c { height: 43px; display: flex; justify-content: center; align-items: center; background: #d2deec; border-bottom: 1px solid #b0c2d6; }
.calc { width: 30px; height: 32px; }
.comps { flex: none; width: 121px; display: flex; flex-direction: column; background: #fff; border-right: 5px solid #dce8f4; }
.comps-head { height: 39px; flex: none; display: flex; align-items: center; padding: 2px 6px 0 7px; background: linear-gradient(180deg, #e2ecf6, #f4f8fc); }
.comps-head b { font-size: 12px; flex: 1; color: #26323e; line-height: 18px; }
.tri-l { width: 0; height: 0; border-top: 5px solid transparent; border-bottom: 5px solid transparent; border-right: 5px solid #1f3a5c; margin-right: 22px; }
.rico { width: 14px; height: 14px; margin: 1px; flex: none; }
.comp-row { height: 25px; flex: none; display: flex; align-items: center; padding-left: 2px; border: 1px solid #9fb2cb; border-top-width: 0; background: linear-gradient(180deg, #e8eff7, #ccdaeb); }
.comp-row span { flex: 1; text-align: center; padding-right: 1px; padding-top: 2px; line-height: 18px; }
.comp-on { background: linear-gradient(180deg, #fde0b2, #fbb25e 60%, #fdd097); }
.wi { width: 20px; height: 16px; flex: none; }
.comp-item { display: flex; flex-direction: column; align-items: center; margin-top: 3px; gap: 3px; line-height: 16px; padding-right: 4px; }
.comp-item-b { margin-top: 8px; }
.bolt-l { width: 22px; height: 30px; }
.fold-l { width: 30px; height: 26px; }

.content { flex: 1; min-width: 0; display: flex; flex-direction: column; }
.tabstrip { height: 34px; flex: none; display: flex; background: #b8cce4; border-bottom: 1px solid #8fa8c4; align-items: flex-end; position: relative; }
.doc-tab { width: 129px; height: 34px; display: flex; align-items: center; padding-left: 8px; gap: 9px; background: linear-gradient(180deg, #f4f8fc, #e6eef8); margin-bottom: -1px; }
.doc-tab b { font-size: 13px; color: #1f2c3a; white-space: nowrap; }
.bolt-s { width: 15px; height: 25px; }
.x { margin-left: 8px; color: #5a6878; font-size: 14px; }
.strip-drop { width: 0; height: 0; margin-left: auto; margin-right: 4px; margin-bottom: 12px; border-left: 4.5px solid transparent; border-right: 4.5px solid transparent; border-top: 6px solid #26405e; }

.ribbon { height: 86px; flex: none; display: grid; grid-template-columns: 83px 72px 100px 64px 81px 46px 78px 49px 70px 64px 83px 30px 73px 53px 73px 76px 107px 67px; background: linear-gradient(180deg, #f4f8fc, #dbe5f0); border-bottom: 1px solid #7d93ac; color: #22303e; line-height: 16px; white-space: nowrap; }
.ri { display: flex; flex-direction: column; align-items: center; padding-top: 1px; }
.ri > span { margin-top: 5px; }
.ri-off { color: #8f9aa5; }
.dn { margin-top: 19px; width: 0; height: 0; border-left: 3px solid transparent; border-right: 3px solid transparent; border-top: 4px solid #3b4b5c; }
.ri-t { padding-top: 8px; line-height: 17px; }
.ri-t > span { margin-top: 0; }
.tg { width: 66px; height: 21px; display: flex; border: 1px solid #b1bdca; border-radius: 2px; background: #eef3f8; margin-bottom: 7px; }
.ri-t2 .tg { margin-left: 8px; }
.tg i { width: 27px; background: linear-gradient(180deg, #d9e2ec, #e8eef5); border-right: 1px solid #b1bdca; }
.tg b { flex: 1; text-align: center; font: 700 10px/19px "Liberation Mono", monospace; color: #8894a2; }

.info { height: 130px; flex: none; position: relative; background: #e8f0fa; }
.legend-main { position: absolute; left: 684px; top: 0; width: 63px; height: 20px; text-align: center; line-height: 18px; background: #f0f5fb; border: 1px solid #7d93ac; border-top: 0; border-radius: 0 0 3px 3px; z-index: 1; }
.info-top { height: 21px; margin-left: 1px; background: linear-gradient(180deg, #fff 0 9px, #7d93ac 9px 10px, #eaf1f9 10px); border-radius: 5px 5px 0 0; }
.info-body { display: flex; margin-left: 4px; height: 106px; border-bottom: 1px solid #8fa4bc; gap: 1px; }
.it { width: 1222px; background: #fff; border-right: 1px solid #9fb2cb; }
.it-row { display: grid; grid-template-columns: 33px 70px 94px 112px 35px 64px 70px 40px 40px 120px 64px 64px 63px 58px 40px 89px 96px 53px 17px; }
.it-row > div { padding: 0 2px; white-space: nowrap; overflow: hidden; }
.it-head { height: 32px; background: linear-gradient(180deg, #f6f9fc, #dfe8f2); border-bottom: 2px solid #90a7c2; }
.it-head > div { line-height: 34px; text-align: center; border-right: 1px solid #a9bdd4; }
.filler { background: #cbd9ea; }
.it-data { height: 23px; background: #aed3f8; }
.it-data > div { line-height: 25px; border-right: 1px solid #c4dbf3; }
.corner { position: relative; }
.corner i { position: absolute; right: 2px; bottom: 2px; width: 0; height: 0; border-left: 10px solid transparent; border-bottom: 12px solid #2f74c8; }
.rowmark { display: flex; align-items: center; background: #d6dbe2; padding-left: 4px !important; }
.rowmark i { width: 0; height: 0; border-top: 4px solid transparent; border-bottom: 4px solid transparent; border-left: 4px solid #111; }
.mt { width: 200px; background: #fff; border-right: 1px solid #9fb2cb; }
.mt-head { height: 21px; display: grid; grid-template-columns: 99px 100px; background: linear-gradient(180deg, #f6f9fc, #dfe8f2); border-bottom: 1px solid #90a7c2; }
.mt-head div { text-align: center; line-height: 24px; border-right: 1px solid #a9bdd4; }

.split-h { height: 6px; flex: none; display: flex; justify-content: center; align-items: center; gap: 8px; background: linear-gradient(180deg, #c4d0dc, #dbe4ee); border-bottom: 1px solid #7d93ac; }
.tri-d { width: 0; height: 0; border-left: 3px solid transparent; border-right: 3px solid transparent; border-top: 4px solid #44617f; }
.dots-h { width: 36px; height: 3px; background: repeating-linear-gradient(90deg, #44617f 0 1px, transparent 1px 3px); }

.lower { height: 693px; flex: none; display: flex; background: #e8f0fa; }
.proc { flex: none; width: 645px; padding: 9px 0 0 1px; position: relative; }
.legend-proc { position: absolute; left: 248px; top: 0; width: 149px; height: 20px; text-align: center; line-height: 18px; background: #f0f5fb; border: 1px solid #7d93ac; border-top: 0; border-radius: 0 0 4px 4px; font-size: 13px; color: #2a3d55; z-index: 1; white-space: nowrap; }
.legend-proc span { font-size: 11px; }
.proc-box { height: 684px; display: flex; padding: 11px 0 0 4px; border: 1px solid #7d93ac; border-bottom: 3px solid #a9bdd4; border-radius: 5px 5px 0 0; background: #eef4fb; }
.vtab { flex: none; width: 19px; height: 90px; margin-top: 4px; background: linear-gradient(90deg, #dbe8f8, #9dbdea); clip-path: polygon(25% 0, 100% 0, 100% 100%, 0 72%, 0 3%); display: flex; justify-content: center; padding-top: 12px; }
.vtab span { writing-mode: vertical-rl; font-weight: 700; color: #26323e; line-height: 14px; }
.blue { flex: none; width: 197px; height: 669px; padding: 8px 1px 0 7px; background: linear-gradient(90deg, #8ab0e6, #cfe2f9); border: 1px solid #3f6aa6; }
.blue-head { height: 34px; display: flex; align-items: center; padding-left: 15px; background: #f5f5f5; color: #3a4855; gap: 23px; white-space: nowrap; }
.bubble { width: 24px; height: 20px; }
.blue-list { height: 277px; background: #fff; border: 1px solid #8ea6c6; }
.gap-v, .gap-mid, .gap-sub { flex: none; display: flex; flex-direction: column; align-items: center; justify-content: center; gap: 3px; }
.gap-v { width: 5px; height: 669px; background: #dfe9f4; }
.gap-mid { width: 4px; background: #b6c6d8; }
.gap-sub { width: 7px; background: #b8c2cc; }
.tri-l2 { width: 0; height: 0; border-top: 5px solid transparent; border-bottom: 5px solid transparent; border-right: 4px solid #44617f; }
.dots-v { width: 3px; height: 36px; background: repeating-linear-gradient(180deg, #44617f 0 1px, transparent 1px 3px); }
.tree { flex: none; width: 415px; height: 669px; display: flex; flex-direction: column; background: #fff; border-left: 1px solid #8ea6c6; }
.tree-main { display: flex; height: 652px; }
.tree-left { width: 397px; display: flex; flex-direction: column; overflow: hidden; }
.tr { display: grid; grid-template-columns: 155px 55px 75px 75px 37px; height: 19px; line-height: 21px; flex: none; white-space: nowrap; }
.tr > div { overflow: hidden; padding-left: 6px; border-right: 1px solid #ececec; }
.tr > div:last-child { border-right: 0; }
.tr-head { height: 18px; line-height: 19px; background: linear-gradient(180deg, #eef4fb, #d6e3f1); border-bottom: 1px solid #a9bdd4; position: relative; z-index: 1; }
.tr-head > div { padding-left: 1px; border-right: 1px solid #a9bdd4; }
.tr-head .tc { text-align: center; padding-left: 0; }
.tree-rows { flex: 1; overflow: hidden; margin-top: -12px; }
.n.n { padding-left: 0; padding-top: 1px; display: flex; align-items: center; background-repeat: no-repeat; }
.fo { background-image: repeating-linear-gradient(180deg, #444 0 1px, transparent 1px 2px), repeating-linear-gradient(180deg, #444 0 1px, transparent 1px 2px), repeating-linear-gradient(90deg, #444 0 1px, transparent 1px 2px); background-size: 1px 100%, 1px 8px, 8px 1px; background-position: 25px 0, 41px 11px, 30px 9px; }
.leaf { padding-left: 55px !important; background-image: repeating-linear-gradient(180deg, #444 0 1px, transparent 1px 2px), repeating-linear-gradient(180deg, #444 0 1px, transparent 1px 2px), repeating-linear-gradient(90deg, #444 0 1px, transparent 1px 2px); background-size: 1px 100%, 1px 100%, 10px 1px; background-position: 25px 0, 41px 0, 42px 9px; }
.leaf.end { background-size: 1px 100%, 1px 10px, 10px 1px; }
.d { width: 14px; height: 16px; margin-right: 6px; flex: none; }
.f { width: 16px; height: 16px; margin: 0 5px 0 9px; flex: none; }
.mi { flex: none; width: 9px; height: 9px; margin-left: 21px; background: linear-gradient(#333, #333) center / 5px 1px no-repeat, #f4f4f4; border: 1px solid #999; }
.tr-sel { background: linear-gradient(180deg, #fafafa, #e2e2e2) no-repeat 52px 0 / 100% 100%; }
.vs { flex: none; width: 17px; display: grid; grid-template-rows: 18px 230px 202px 1fr 18px; background: #f2f2f2; justify-items: center; border-left: 1px solid #e4e4e4; }
.ar-u, .ar-d { width: 0; height: 0; align-self: center; border-left: 5px solid transparent; border-right: 5px solid transparent; }
.ar-u { border-bottom: 6px solid #666; }
.ar-d { border-top: 6px solid #666; }
.vs-thumb { width: 100%; background: linear-gradient(90deg, #eef1f5, #dbe2ea); border: 1px solid #a3b1c2; border-radius: 2px; display: flex; align-items: center; justify-content: center; }
.lines { width: 9px; height: 7px; background: repeating-linear-gradient(180deg, #7a8a9a 0 1px, transparent 1px 3px); }
.hs { height: 17px; display: grid; grid-template-columns: 14px 198px 1fr 16px 17px; align-items: center; background: #f2f2f2; border-top: 1px solid #dadada; }
.ar-l, .ar-r { width: 0; height: 0; justify-self: center; border-top: 6px solid transparent; border-bottom: 6px solid transparent; }
.ar-l { border-right: 5px solid #3f3f3f; }
.ar-r { border-left: 5px solid #3f3f3f; }
.hs em { height: 17px; background: #fff; }
.hs-thumb { height: 15px; background: linear-gradient(180deg, #f2f4f7, #d8dfe7); border: 1px solid #8d9cae; border-radius: 2px; display: flex; align-items: center; justify-content: center; }
.lines-v { width: 7px; height: 9px; background: repeating-linear-gradient(90deg, #7a8a9a 0 1px, transparent 1px 3px); }

.detail { flex: 1; min-width: 0; display: flex; flex-direction: column; border-left: 1px solid #8fa4bc; background: #fff; }
.detail-tabs { height: 25px; flex: none; display: flex; align-items: center; background: linear-gradient(180deg, #eaf2fb, #c7d9ed); border-bottom: 1px solid #a9bdd4; }
.dt-bom { margin-left: 8px; font-size: 10px; color: #333; }
.detail-tabs .strip-drop { margin-bottom: 0; margin-right: 5px; border-top-color: #111; }
.dt-on { width: 68px; height: 25px; background: linear-gradient(180deg, #3b7fd6, #1b56b0); color: #fff; text-align: center; line-height: 22px; position: relative; }
.dt-on b { font-size: 13px; }
.dt-on i { position: absolute; left: 30px; bottom: 0; width: 0; height: 0; border-left: 5px solid transparent; border-right: 5px solid transparent; border-bottom: 5px solid #fff; }
.detail-body { flex: 1; min-height: 0; display: flex; }
.sub { flex: none; width: 375px; display: flex; flex-direction: column; }
.sub-r { width: 396px; }
.subtabs { height: 24px; flex: none; padding-left: 4px; display: flex; align-items: flex-end; background: linear-gradient(180deg, #f2f7fc, #d2e0f0); border-bottom: 1px solid #7f9cc0; }
.subtab-wrap { filter: drop-shadow(0 -1px 0 #5f83ae) drop-shadow(1px 0 0 #5f83ae) drop-shadow(-1px 0 0 #5f83ae); }
.subtab { width: 95px; height: 23px; text-align: center; padding-left: 24px; line-height: 24px; background: linear-gradient(180deg, #f8fbfe, #bcd2ec); clip-path: polygon(17px 0, 100% 0, 100% 100%, 0 100%); }
.subtab b { font-size: 13px; color: #1a2430; }
.pt { padding-top: 5px; background: linear-gradient(180deg, #c9d9ec 5px, #fff 5px); flex: 1; }
.pt-row { display: grid; grid-template-columns: 34px 58px 100px 100px 83px; height: 22px; line-height: 25px; border-bottom: 1px solid #c6d6ea; }
.pt-row > div { padding: 0 2px; white-space: nowrap; overflow: hidden; border-right: 1px solid #c6d6ea; }
.pt-head { height: 31px; background: linear-gradient(180deg, #f4f8fc, #dde7f2); border-bottom: 2px solid #90a7c2; }
.pt-head > div { text-align: center; line-height: 33px; border-right: 1px solid #a9bdd4; }
.pt-row .rowmark { background: #dbe6f2; }
.pk { color: #a8127f; }
.blu { background: #e6effa; }
.gry { background: #f2f2f2; }
.note-head { height: 30px; flex: none; display: grid; grid-template-columns: 198px 198px; padding-top: 3px; background: linear-gradient(180deg, #fff 3px, #eaf1f9 3px, #d9e5f2); border-bottom: 2px solid #90a7c2; color: #1e3a6e; }
.note-head div { padding-left: 2px; line-height: 28px; border-right: 1px solid #a9bdd4; }
.note-body { flex: 1; display: grid; grid-template-columns: 198px 198px; background: #f0f0f0; }
.note { display: flex; border-right: 2px solid #7f9cc0; }
.note-t { flex: 1; padding: 1px 2px; }
.note-s { width: 16px; display: flex; flex-direction: column; justify-content: space-between; align-items: center; padding: 9px 0 6px; background: #f4f4f4; border-left: 1px solid #e0e0e0; }
.nu, .nd { width: 0; height: 0; border-left: 4px solid transparent; border-right: 4px solid transparent; }
.nu { border-bottom: 4px solid #a8a8a8; }
.nd { border-top: 4px solid #a8a8a8; }
.status-end { flex: 1; background: #e9f3fb; border-top: 2px solid #6f86a2; }

.bottom-bits { position: absolute; left: 14px; top: 1000px; display: flex; gap: 74px; }
.bb-a { width: 22px; height: 5px; background: #1f3864; }
.bb-b { width: 6px; height: 5px; border-radius: 3px 3px 0 0; background: #1f3864; }

.lang { position: absolute; left: 1802px; top: 936px; width: 79px; height: 26px; display: flex; align-items: center; padding-left: 4px; background: linear-gradient(180deg, #b8b8b8 0, #8a8a8a 45%, #595959 50%, #5c5c5c 100%); border-top: 1px solid #777; color: #fff; font: 700 11px "Liberation Mono", monospace; }
.lang-dots { width: 8px; height: 17px; background: repeating-linear-gradient(180deg, #222 0 1px, transparent 1px 4px); }
.lang > span:nth-of-type(1) { margin-left: 9px; }
.lang-q { width: 15px; height: 15px; margin-left: 9px; border-radius: 50%; text-align: center; line-height: 15px; background: #1427a6; box-shadow: 0 0 0 1px #8fa0e0; }
.lang-m { margin-left: 9px; display: flex; flex-direction: column; gap: 7px; }
.lang-m i { width: 6px; height: 2px; background: #fff; }

.arrows { position: absolute; left: 0; top: 0; width: 1920px; height: 1005px; pointer-events: none; }
```
